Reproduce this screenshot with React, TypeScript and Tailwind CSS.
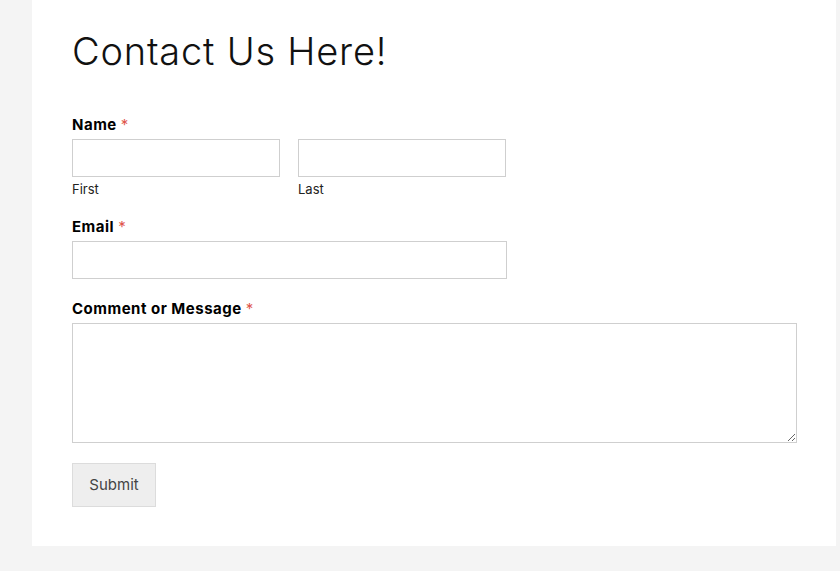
import React from "react";

const Label = ({ children }: { children: React.ReactNode }) => (
  <label className="block text-[15px] font-bold leading-[20px] tracking-[0.5px] text-black">
    {children} <span className="font-normal text-[#e0564c]">*</span>
  </label>
);

export default function App() {
  return (
    <div
      className="min-h-[571px] bg-[#f4f4f4] pl-[32px] pr-[4px]"
      style={{ fontFamily: "Inter, 'Open Sans', sans-serif" }}
    >
      <div className="h-[546px] bg-white pl-[40px] pr-[39px] pt-[28px]">
        <h1 className="text-[38px] font-light leading-[46px] text-[#111] tracking-[0.8px]">
          Contact Us Here!
        </h1>

        <form className="mt-[41px]" onSubmit={(e) => e.preventDefault()}>
          {/* Name */}
          <Label>Name</Label>
          <div className="mt-[4px] flex gap-[18px]">
            <div>
              <input className="block h-[38px] w-[208px] border border-[#cfcfcf] bg-white outline-none" />
              <span className="mt-[3px] block text-[13px] leading-[18px] text-[#222]">First</span>
            </div>
            <div>
              <input className="block h-[38px] w-[208px] border border-[#cfcfcf] bg-white outline-none" />
              <span className="mt-[3px] block text-[13px] leading-[18px] text-[#222]">Last</span>
            </div>
          </div>

          {/* Email */}
          <div className="mt-[19px]">
            <Label>Email</Label>
            <input className="mt-[4px] block h-[38px] w-[435px] border border-[#cfcfcf] bg-white outline-none" />
          </div>

          {/* Comment */}
          <div className="mt-[20px]">
            <Label>Comment or Message</Label>
            <textarea className="mt-[4px] block h-[120px] w-full border border-[#cfcfcf] bg-white outline-none" />
          </div>

          <button
            type="submit"
            className="mt-[20px] h-[44px] w-[84px] border border-[#dcdcdc] bg-[#eeeeee] text-[15px] text-[#444]"
          >
            Submit
          </button>
        </form>
      </div>
    </div>
  );
}
